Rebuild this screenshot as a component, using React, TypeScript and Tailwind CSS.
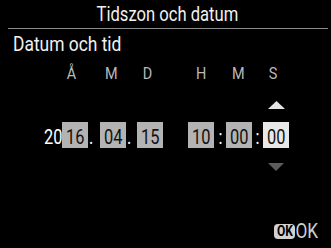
import React from 'react';

const cols = 'grid grid-cols-[62px_26px_12px_26px_11px_26px_25px_26px_12px_26px_11px_26px]';

const Box = ({ value, active }: { value: string; active?: boolean }) => (
  <div
    className={`h-[26px] flex items-start justify-center pt-[5px] text-[20px] leading-none text-[#111] ${
      active ? 'bg-[#e8e8e8]' : 'bg-[#b3b3b3]'
    }`}
  >
    <span className="inline-block scale-x-[0.82]">{value}</span>
  </div>
);

const Dot = () => (
  <div className="h-[26px] flex items-start justify-start pl-[1px] pt-[5px] text-[20px] leading-none text-white">
    <span className="inline-block origin-left scale-x-[0.82]">.</span>
  </div>
);

const Colon = () => (
  <div className="h-[26px] flex items-start justify-center pt-[5px] text-[20px] leading-none text-white">
    <span className="inline-block scale-x-[0.82]">:</span>
  </div>
);

const App = () => {
  const heads = [
    { t: 'Å', c: 'pr-[6px]' },
    { t: 'M', c: 'pr-[4px]' },
    { t: 'D', c: 'pr-[4px]' },
    { t: 'H', c: 'pl-[1px]' },
    { t: 'M', c: 'pr-[2px]' },
    { t: 'S', c: 'pr-[5px]' },
  ];

  return (
    <div className="w-[331px] h-[248px] bg-black text-white font-['Roboto','Liberation_Sans',sans-serif] overflow-hidden flex flex-col">
      {/* Title */}
      <div className="ml-[8px] mr-[3px] h-[29px] border-b border-[#8a8a8a] flex justify-center pt-[4px] pr-[1px]">
        <span className="inline-block scale-x-[0.83] text-[20px] leading-none text-[#f2f2f2] whitespace-nowrap">
          Tidszon och datum
        </span>
      </div>

      <div className="pl-[13px] pt-[5px] text-[20px] leading-none text-[#f2f2f2]">
        <span className="inline-block origin-left scale-x-[0.87] whitespace-nowrap">Datum och tid</span>
      </div>

      {/* Column headers */}
      <div className={`${cols} mt-[11px] h-[17px] text-[17px] leading-none text-[#bababa]`}>
        <div />
        {heads.map((h, i) => (
          <React.Fragment key={i}>
            <div className={`text-center ${h.c} ${i === 3 ? 'col-start-8' : ''}`}>
              <span className="inline-block scale-x-[0.85]">{h.t}</span>
            </div>
            {i < 5 && i !== 2 && <div />}
          </React.Fragment>
        ))}
      </div>

      {/* Up arrow */}
      <div className={`${cols} mt-[19px] h-[8px]`}>
        <div className="col-start-12 flex justify-center">
          <svg width="17" height="8" viewBox="0 0 17 8" className="block">
            <polygon points="8.5,0 17,8 0,8" fill="#e4e4e4" />
          </svg>
        </div>
      </div>

      {/* Values */}
      <div className={`${cols} mt-[13px]`}>
        <div className="h-[26px] flex items-start justify-end pt-[5px] text-[20px] leading-none text-white">
          <span className="inline-block origin-right scale-x-[0.82]">20</span>
        </div>
        <Box value="16" />
        <Dot />
        <Box value="04" />
        <Dot />
        <Box value="15" />
        <div />
        <Box value="10" />
        <Colon />
        <Box value="00" />
        <Colon />
        <Box value="00" active />
      </div>

      {/* Down arrow */}
      <div className={`${cols} mt-[15px] h-[8px]`}>
        <div className="col-start-12 flex justify-center">
          <svg width="16" height="8" viewBox="0 0 16 8" className="block">
            <polygon points="0,0 16,0 8,8" fill="#5c5c5c" />
          </svg>
        </div>
      </div>

      {/* OK */}
      <div className="mt-auto mb-[6px] mr-[13px] flex justify-end items-center">
        <span className="h-[15px] w-[21px] rounded-[4px] bg-[#d2d2d2] text-black text-[15px] font-bold leading-none flex items-center justify-center">
          <span className="inline-block scale-x-[0.8]">OK</span>
        </span>
        <span className="w-[23px] text-[21px] leading-none text-[#cfcfcf] flex justify-center">
          <span className="inline-block scale-x-[0.82]">OK</span>
        </span>
      </div>
    </div>
  );
};

export default App;
